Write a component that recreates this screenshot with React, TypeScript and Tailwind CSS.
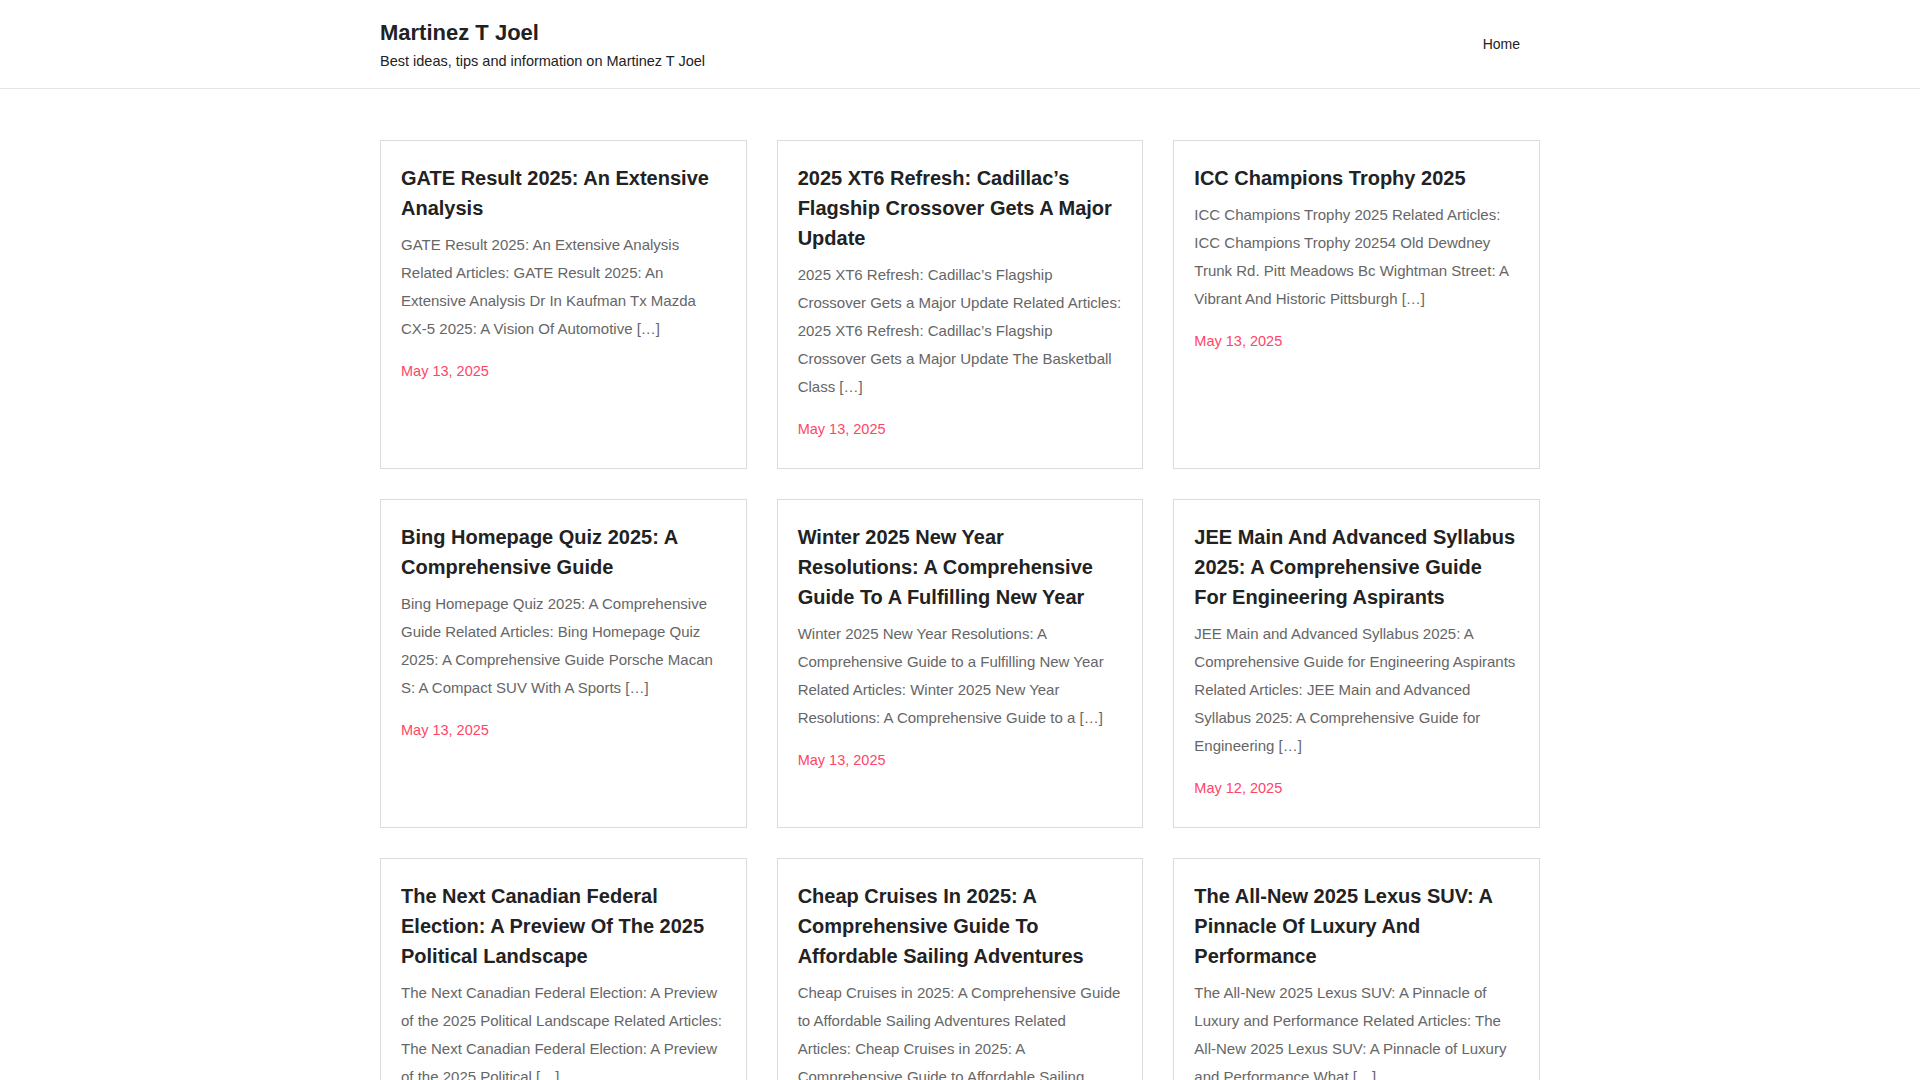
const posts = [
  { title: 'GATE Result 2025: An Extensive Analysis', excerpt: 'GATE Result 2025: An Extensive Analysis Related Articles: GATE Result 2025: An Extensive Analysis Dr In Kaufman Tx Mazda CX-5 2025: A Vision Of Automotive […]', date: 'May 13, 2025' },
  { title: '2025 XT6 Refresh: Cadillac’s Flagship Crossover Gets A Major Update', excerpt: '2025 XT6 Refresh: Cadillac’s Flagship Crossover Gets a Major Update Related Articles: 2025 XT6 Refresh: Cadillac’s Flagship Crossover Gets a Major Update The Basketball Class […]', date: 'May 13, 2025' },
  { title: 'ICC Champions Trophy 2025', excerpt: 'ICC Champions Trophy 2025 Related Articles: ICC Champions Trophy 20254 Old Dewdney Trunk Rd. Pitt Meadows Bc Wightman Street: A Vibrant And Historic Pittsburgh […]', date: 'May 13, 2025' },
  { title: 'Bing Homepage Quiz 2025: A Comprehensive Guide', excerpt: 'Bing Homepage Quiz 2025: A Comprehensive Guide Related Articles: Bing Homepage Quiz 2025: A Comprehensive Guide Porsche Macan S: A Compact SUV With A Sports […]', date: 'May 13, 2025' },
  { title: 'Winter 2025 New Year Resolutions: A Comprehensive Guide To A Fulfilling New Year', excerpt: 'Winter 2025 New Year Resolutions: A Comprehensive Guide to a Fulfilling New Year Related Articles: Winter 2025 New Year Resolutions: A Comprehensive Guide to a […]', date: 'May 13, 2025' },
  { title: 'JEE Main And Advanced Syllabus 2025: A Comprehensive Guide For Engineering Aspirants', excerpt: 'JEE Main and Advanced Syllabus 2025: A Comprehensive Guide for Engineering Aspirants Related Articles: JEE Main and Advanced Syllabus 2025: A Comprehensive Guide for Engineering […]', date: 'May 12, 2025' },
  { title: 'The Next Canadian Federal Election: A Preview Of The 2025 Political Landscape', excerpt: 'The Next Canadian Federal Election: A Preview of the 2025 Political Landscape Related Articles: The Next Canadian Federal Election: A Preview of the 2025 Political […]', date: 'May 12, 2025' },
  { title: 'Cheap Cruises In 2025: A Comprehensive Guide To Affordable Sailing Adventures', excerpt: 'Cheap Cruises in 2025: A Comprehensive Guide to Affordable Sailing Adventures Related Articles: Cheap Cruises in 2025: A Comprehensive Guide to Affordable Sailing Adventures Aston […]', date: 'May 12, 2025' },
  { title: 'The All-New 2025 Lexus SUV: A Pinnacle Of Luxury And Performance', excerpt: 'The All-New 2025 Lexus SUV: A Pinnacle of Luxury and Performance Related Articles: The All-New 2025 Lexus SUV: A Pinnacle of Luxury and Performance What […]', date: 'May 12, 2025' },
];

export default function App() {
  return (
    <div className="h-screen w-full overflow-y-scroll bg-white text-[#222]" style={{ fontFamily: '"Liberation Sans", Arial, sans-serif' }}>
      {/* Header */}
      <header className="border-b border-[#e5e5e5]">
        <div className="mx-auto w-[1160px] h-[88px] flex items-center justify-between">
          <div className="pt-[2px]">
            <div className="text-[22px] font-bold leading-[30px] text-[#222]">Martinez T Joel</div>
            <div className="text-[14.5px] leading-[22px] mt-[2px] text-[#222]">Best ideas, tips and information on Martinez T Joel</div>
          </div>
          <nav className="pr-[20px]">
            <a className="text-[14px] text-[#222]">Home</a>
          </nav>
        </div>
      </header>

      {/* Posts */}
      <main className="mx-auto w-[1160px] pt-[51px] pb-[40px] grid grid-cols-3 gap-x-[30px] gap-y-[30px]">
        {posts.map((p) => (
          <article key={p.title} className="border border-[#dcdcdc] px-[20px] pt-[22px] pb-[28px]">
            <h2 className="text-[20px] font-bold leading-[30px] text-[#222]">{p.title}</h2>
            <p className="mt-[8px] text-[15px] leading-[28px] text-[#666]">{p.excerpt}</p>
            <div className="mt-[17px] text-[14.5px] leading-[22px] text-[#ff4566]">{p.date}</div>
          </article>
        ))}
      </main>
    </div>
  );
}
